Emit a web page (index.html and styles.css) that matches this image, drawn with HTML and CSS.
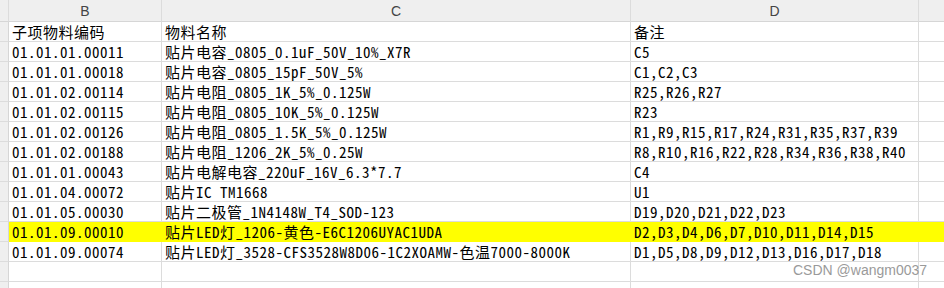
FILE: index.html
```html
<!DOCTYPE html>
<html lang="zh-CN">
<head>
<meta charset="utf-8">
<title>Sheet</title>
<link rel="stylesheet" href="styles.css">
</head>
<body>
<div class="sheet">
  <div class="hd corner"></div>
  <div class="hd col">B</div>
  <div class="hd col">C</div>
  <div class="hd col">D</div>
  <div class="hd col last"></div>

  <div class="rh"></div><div class="c">子项物料编码</div><div class="c">物料名称</div><div class="c">备注</div><div class="c last"></div>
  <div class="rh"></div><div class="c">01.01.01.00011</div><div class="c">贴片电容_0805_0.1uF_50V_10%_X7R</div><div class="c">C5</div><div class="c last"></div>
  <div class="rh"></div><div class="c">01.01.01.00018</div><div class="c">贴片电容_0805_15pF_50V_5%</div><div class="c">C1,C2,C3</div><div class="c last"></div>
  <div class="rh"></div><div class="c">01.01.02.00114</div><div class="c">贴片电阻_0805_1K_5%_0.125W</div><div class="c">R25,R26,R27</div><div class="c last"></div>
  <div class="rh"></div><div class="c">01.01.02.00115</div><div class="c">贴片电阻_0805_10K_5%_0.125W</div><div class="c">R23</div><div class="c last"></div>
  <div class="rh"></div><div class="c">01.01.02.00126</div><div class="c">贴片电阻_0805_1.5K_5%_0.125W</div><div class="c">R1,R9,R15,R17,R24,R31,R35,R37,R39</div><div class="c last"></div>
  <div class="rh"></div><div class="c">01.01.02.00188</div><div class="c">贴片电阻_1206_2K_5%_0.25W</div><div class="c">R8,R10,R16,R22,R28,R34,R36,R38,R40</div><div class="c last"></div>
  <div class="rh"></div><div class="c">01.01.01.00043</div><div class="c">贴片电解电容_220uF_16V_6.3*7.7</div><div class="c">C4</div><div class="c last"></div>
  <div class="rh"></div><div class="c">01.01.04.00072</div><div class="c">贴片IC TM1668</div><div class="c">U1</div><div class="c last"></div>
  <div class="rh"></div><div class="c">01.01.05.00030</div><div class="c">贴片二极管_1N4148W_T4_SOD-123</div><div class="c">D19,D20,D21,D22,D23</div><div class="c last"></div>
  <div class="rh"></div><div class="c hl">01.01.09.00010</div><div class="c hl">贴片LED灯_1206-黄色-E6C1206UYAC1UDA</div><div class="c hl">D2,D3,D4,D6,D7,D10,D11,D14,D15</div><div class="c hl last"></div>
  <div class="rh"></div><div class="c">01.01.09.00074</div><div class="c">贴片LED灯_3528-CFS3528W8D06-1C2XOAMW-色温7000-8000K</div><div class="c">D1,D5,D8,D9,D12,D13,D16,D17,D18</div><div class="c last"></div>
  <div class="rh"></div><div class="c"></div><div class="c"></div><div class="c"></div><div class="c last"></div>
  <div class="rh"></div><div class="c"></div><div class="c"></div><div class="c"></div><div class="c last"></div>
</div>
<div class="mark">CSDN @wangm0037</div>
</body>
</html>
```
FILE: styles.css
```css
html, body {
  margin: 0;
  padding: 0;
  background: #ffffff;
  overflow: hidden;
}
body {
  position: relative;
  width: 944px;
  height: 288px;
}
.sheet {
  display: grid;
  grid-template-columns: 9px 153px 469px 288px 40px;
  grid-auto-rows: 20px;
  grid-template-rows: 22px;
  font-family: "Noto Sans Mono CJK SC", "Noto Sans CJK SC", "Liberation Mono", monospace;
  font-size: 15px;
  letter-spacing: 0.5px;
  color: #000;
}
.hd {
  background: #efefef;
  border-bottom: 1px solid #d6d6d6;
  border-right: 1px solid #dcdcdc;
  box-sizing: border-box;
  font-family: "Liberation Sans", Arial, sans-serif;
  font-size: 14px;
  letter-spacing: 0;
  color: #444;
  display: flex;
  align-items: center;
  justify-content: center;
}
.hd.last { border-right: none; }
.rh {
  background: #efefef;
  border-right: 1px solid #d6d6d6;
  border-bottom: 1px solid #dcdcdc;
  box-sizing: border-box;
}
.c {
  box-sizing: border-box;
  border-right: 1px solid #dcdcdc;
  border-bottom: 1px solid #dcdcdc;
  padding: 0 3px;
  white-space: nowrap;
  overflow: hidden;
  display: flex;
  align-items: center;
  line-height: 19px;
}
.c.last { border-right: none; }
.c.hl {
  background: #ffff00;
  border-color: #ffff00;
}
.mark {
  position: absolute;
  left: 793px;
  top: 262px;
  font-family: "Liberation Sans", Arial, sans-serif;
  font-size: 14px;
  color: #9a9a9a;
  line-height: 16px;
}
```
